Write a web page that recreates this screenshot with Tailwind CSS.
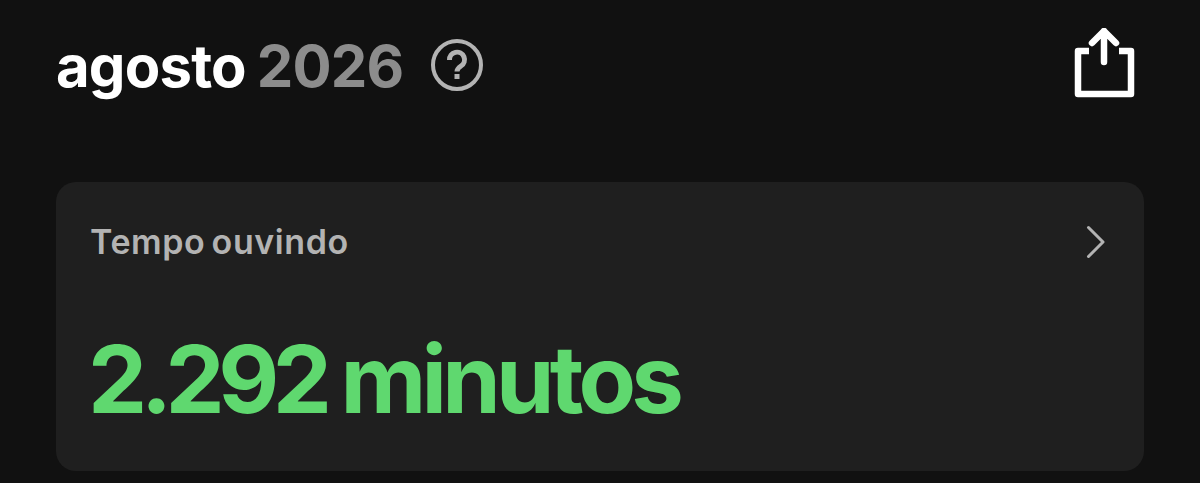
<!DOCTYPE html>
<html lang="pt">
<head>
<meta charset="utf-8">
<script src="https://cdn.jsdelivr.net/npm/@tailwindcss/browser@4"></script>
</head>
<body class="bg-[#111111] font-['Inter',sans-serif] overflow-hidden">
<div class="w-[1200px] h-[483px] flex flex-col pl-[56px] pr-[56px] pt-[26px] overflow-hidden">
  <header class="flex items-center justify-between h-[80px] pr-[8px]">
    <div class="flex items-center">
      <h1 class="text-[58px] leading-[80px] font-bold tracking-[-0.8px] [word-spacing:-2px] text-white">agosto <span class="text-[#8c8c8c]">2026</span></h1>
      <svg class="ml-[27px] mb-[3px] w-[54px] h-[54px]" viewBox="0 0 54 54" fill="none"><circle cx="27" cy="27" r="24" stroke="#b3b3b3" stroke-width="4"/><path d="M19.500 22a7.500 7.500 0 1 1 11.500 6c-2.500 1.700-4 2.800-4 5.500" stroke="#b3b3b3" stroke-width="5" /><rect x="24.500" y="36" width="5" height="5" fill="#b3b3b3"/></svg>
    </div>
    <svg class="w-[64px] h-[76px]" viewBox="0 0 64 76" fill="none" stroke="#fff" stroke-width="6.500" stroke-linejoin="round"><path d="M17 23H6v43h53V23H47"/><path stroke-linecap="round" d="M32 34V3M20 15L32 3l12 12"/></svg>
  </header>
  <section class="mt-[76px] w-[1088px] h-[289px] rounded-[20px] bg-[#1f1f1f] pl-[34px] pr-[36px] pt-[40px] flex flex-col">
    <div class="flex items-center justify-between h-[40px]">
      <span class="text-[34px] leading-[40px] font-semibold tracking-[0.6px] [word-spacing:-3px] text-[#b3b3b3]">Tempo ouvindo</span>
      <svg class="w-[24px] h-[36px]" viewBox="0 0 24 36" fill="none" stroke="#b3b3b3" stroke-width="3" stroke-linecap="round" stroke-linejoin="round"><path d="M4.500 3.500L19 18L4.500 32.500"/></svg>
    </div>
    <p class="mt-[67px] -ml-[2px] text-[94px] leading-[100px] font-bold text-[#5fd86f] whitespace-nowrap"><span class="tracking-[-6.500px]">2.292</span><span class="ml-[15px] tracking-[-4.800px]">minutos</span></p>
  </section>
</div>
</body>
</html>
